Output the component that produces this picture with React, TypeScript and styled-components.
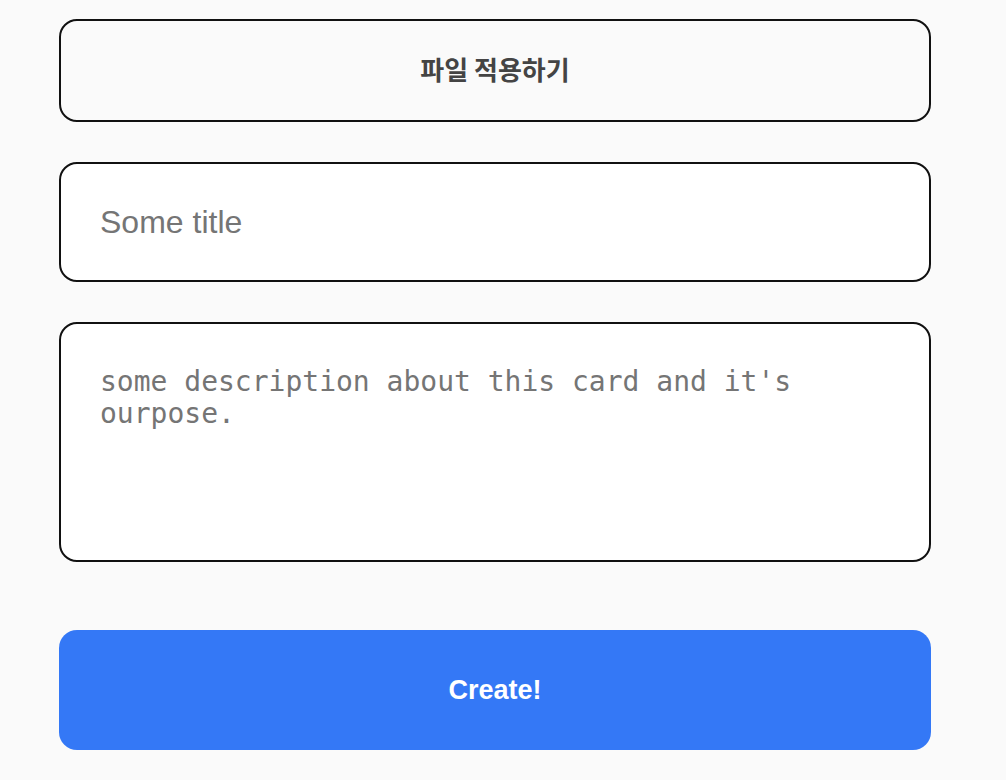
import React from "react";
import styled, { createGlobalStyle } from "styled-components";

const Global = createGlobalStyle`
  html, body { margin: 0; padding: 0; background: #fafafa; }
  * { box-sizing: border-box; }
`;

const Page = styled.div`
  width: 1006px;
  min-height: 780px;
  background: #fafafa;
  padding: 19px 75px 0 59px;
  display: flex;
  flex-direction: column;
`;

const FileButton = styled.button`
  height: 103px;
  width: 100%;
  border: 2px solid #111;
  border-radius: 18px;
  background: transparent;
  font-family: "Noto Sans CJK KR", "Noto Sans", sans-serif;
  font-weight: 700;
  font-size: 26px;
  line-height: 1;
  padding: 0 0 4px;
  color: #444;
  cursor: pointer;
`;

const TitleInput = styled.input`
  margin-top: 40px;
  height: 120px;
  width: 100%;
  border: 2px solid #111;
  border-radius: 18px;
  background: #fff;
  padding: 0 39px;
  font-family: "Liberation Sans", Arial, sans-serif;
  font-size: 32px;
  color: #222;
  outline: none;
  &::placeholder { color: #757575; }
`;

const DescArea = styled.textarea`
  margin-top: 40px;
  height: 240px;
  width: 100%;
  border: 2px solid #111;
  border-radius: 18px;
  background: #fff;
  padding: 42px 39px 39px;
  font-family: "DejaVu Sans Mono", monospace;
  font-size: 28px;
  line-height: 32px;
  resize: none;
  color: #222;
  outline: none;
  &::placeholder { color: #757575; }
`;

const CreateButton = styled.button`
  margin-top: 68px;
  height: 120px;
  width: 100%;
  border: none;
  border-radius: 18px;
  background: #3478f6;
  color: #fff;
  font-family: "Liberation Sans", Arial, sans-serif;
  font-weight: 700;
  font-size: 27px;
  cursor: pointer;
`;

export default function App() {
  return (
    <>
      <Global />
      <Page>
        <FileButton>파일 적용하기</FileButton>
        <TitleInput placeholder="Some title" />
        <DescArea placeholder="some description about this card and it's ourpose." />
        <CreateButton>Create!</CreateButton>
      </Page>
    </>
  );
}
